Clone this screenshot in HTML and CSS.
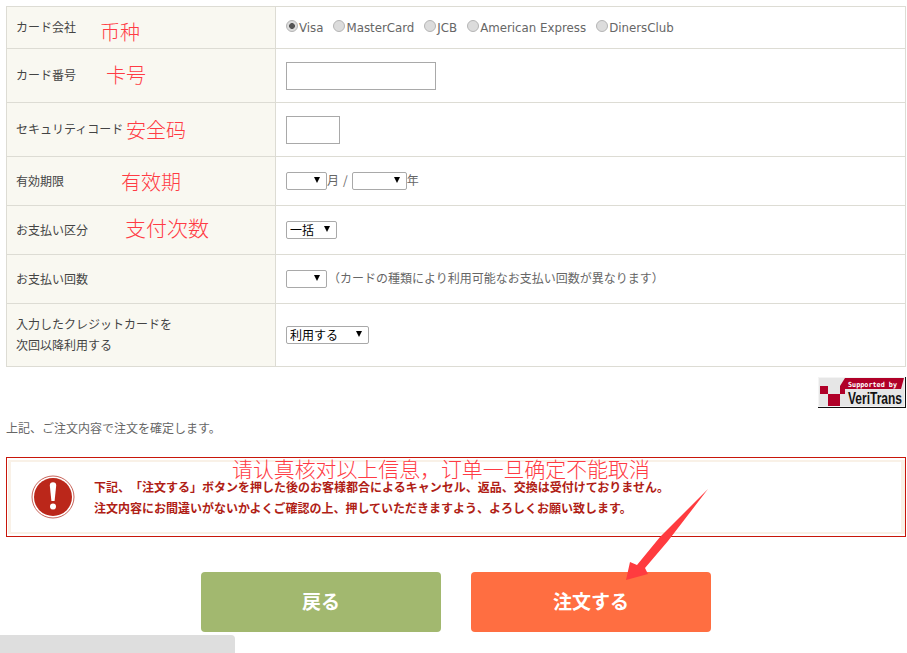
FILE: index.html
```html
<!DOCTYPE html>
<html lang="ja">
<head>
<meta charset="utf-8">
<title>注文</title>
<link rel="stylesheet" href="styles.css">
</head>
<body>
<div class="page">
  <table class="form">
    <tr class="r1"><th>カード会社</th><td>
      <div class="radios">
        <label class="radio"><input type="radio" name="c" checked>Visa</label>
        <label class="radio"><input type="radio" name="c">MasterCard</label>
        <label class="radio"><input type="radio" name="c">JCB</label>
        <label class="radio"><input type="radio" name="c">American Express</label>
        <label class="radio"><input type="radio" name="c">DinersClub</label>
      </div>
    </td></tr>
    <tr class="r2"><th>カード番号</th><td><input class="txt txt-long" type="text"></td></tr>
    <tr class="r2"><th>セキュリティコード</th><td><input class="txt txt-short" type="text"></td></tr>
    <tr class="r3"><th>有効期限</th><td>
      <div class="line"><span class="sel w41"><select></select></span><span class="unit">月</span><span class="slash">/</span><span class="sel w55"><select></select></span><span class="unit">年</span></div>
    </td></tr>
    <tr class="r3"><th>お支払い区分</th><td>
      <div class="line"><span class="sel w51"><select><option>一括</option></select></span></div>
    </td></tr>
    <tr class="r3"><th>お支払い回数</th><td>
      <div class="line"><span class="sel w41"><select></select></span><span class="note">（カードの種類により利用可能なお支払い回数が異なります）</span></div>
    </td></tr>
    <tr class="r4"><th>入力したクレジットカードを<br>次回以降利用する</th><td>
      <div class="line"><span class="sel w83"><select><option>利用する</option></select></span></div>
    </td></tr>
  </table>

  <div class="logo-row">
    <svg class="logo" width="88" height="31" viewBox="0 0 88 31">
      <rect x="0" y="0" width="88" height="31" fill="#111"/>
      <rect x="0" y="0" width="87" height="30" fill="#f4f4f4"/>
      <rect x="1" y="1" width="85" height="28" fill="#e6e6e6"/>
      <path d="M27 1H86L83 12H22V9Z" fill="#b00028"/>
      <rect x="2" y="9" width="8" height="8" fill="#b00028"/>
      <rect x="10" y="17" width="12" height="12" fill="#b00028"/>
      <rect x="22" y="12" width="5" height="5" fill="#b00028"/>
      <text class="logo-top" x="30" y="10" textLength="49" lengthAdjust="spacingAndGlyphs">Supported by</text>
      <text class="logo-main" x="30" y="27" textLength="54" lengthAdjust="spacingAndGlyphs">VeriTrans</text>
    </svg>
  </div>

  <p class="confirm">上記、ご注文内容で注文を確定します。</p>

  <div class="alert">
    <div class="alert-in">
      <svg class="alert-icon" width="44" height="44" viewBox="0 0 44 44">
        <circle cx="22" cy="22" r="21" fill="#fff" stroke="#c9645a" stroke-width="1"/>
        <circle cx="22" cy="22" r="19" fill="#bb271a"/>
        <path d="M18.8 10.5a3.2 3.2 0 0 1 6.4 0L23.6 26h-3.2Z" fill="#fff"/>
        <circle cx="22" cy="31.5" r="3" fill="#fff"/>
      </svg>
      <div class="alert-text">
        <p>下記、「注文する」ボタンを押した後のお客様都合によるキャンセル、返品、交換は受付けておりません。</p>
        <p>注文内容にお間違いがないかよくご確認の上、押していただきますよう、よろしくお願い致します。</p>
      </div>
    </div>
  </div>

  <div class="buttons">
    <a class="btn btn-back">戻る</a>
    <a class="btn btn-order">注文する</a>
  </div>

  <div class="bar"></div>

  <span class="ann a1">币种</span>
  <span class="ann a2">卡号</span>
  <span class="ann a3">安全码</span>
  <span class="ann a4">有效期</span>
  <span class="ann a5">支付次数</span>
  <span class="ann a6">请认真核对以上信息，订单一旦确定不能取消</span>
  <svg class="arrow" width="90" height="100" viewBox="0 0 90 100">
    <path d="M87 0 L39 48 L16 76 L9 73 L5 91 L27 85 L24 79 L47 52Z" fill="#ff3b3f"/>
  </svg>
</div>
</body>
</html>
```
FILE: styles.css
```css
* { box-sizing: border-box; }
html, body { margin: 0; padding: 0; background: #fff; }
body {
  font-family: "DejaVu Sans", "Noto Sans CJK JP", sans-serif;
  font-size: 12px;
  color: #666;
  overflow: hidden;
  text-spacing-trim: space-all;
}
.page { position: relative; width: 907px; height: 653px; padding: 6px 1px 0 6px; overflow: hidden; }
.form { width: 900px; border-collapse: collapse; table-layout: fixed; }
.form th, .form td { border: 1px solid #dddcd4; padding: 0 10px; vertical-align: middle; }
.form th {
  width: 269px;
  background: #f9f8f1;
  font-family: "Noto Sans CJK JP", sans-serif;
  font-weight: 400;
  text-align: left;
  color: #444;
  line-height: 21px;
  padding: 0 0 2px 9px;
}
.r1 { height: 42px; } .r2 { height: 54px; } .r3 { height: 49px; } .r4 { height: 63px; }
.r1 td { vertical-align: top; padding-top: 13px; }
.radios { display: flex; gap: 10px; color: #666; font-size: 11.8px; }
.radio { display: flex; align-items: center; }
.radio input {
  appearance: none; margin: 0 1px 3px 0; width: 12px; height: 12px; border-radius: 50%;
  border: 1px solid #b5b5b5; background: #dcdcdc;
}
.radio input:checked { background: radial-gradient(circle, #555 0 2.6px, #dcdcdc 3.2px); }
.txt { display: block; border: 1px solid #a9a9a9; background: #fff; height: 28px; padding: 0; margin: 0; }
.txt-long { width: 150px; } .txt-short { width: 54px; }
.line { display: flex; align-items: center; font-family: "Noto Sans CJK JP", sans-serif; color: #666; }
.sel { position: relative; display: block; height: 18px; flex: none; }
.sel::after {
  content: ""; position: absolute; right: 7px; top: 5px; width: 0; height: 0;
  border-left: 3px solid transparent; border-right: 3px solid transparent; border-top: 6px solid #000;
}
.sel select {
  appearance: none; display: block; width: 100%; height: 18px; margin: 0; padding: 0 0 0 3px;
  border: 1px solid #a9a9a9; border-radius: 2px; background: #fff; color: #000;
  font-family: "Noto Sans CJK JP", sans-serif; font-size: 12px; line-height: 16px;
}
.w41 { width: 41px; } .w55 { width: 55px; } .w51 { width: 51px; } .w83 { width: 83px; }
.unit { margin-bottom: 3px; }
.slash { margin: 0 4px 3px 4px; }
.note { margin: 0 0 3px 1px; }
.logo-row { display: flex; justify-content: flex-end; margin-top: 10px; height: 31px; }
.logo { display: block; }
.logo-top { font-family: "DejaVu Sans Mono", monospace; font-size: 7px; font-weight: 700; fill: #fff; }
.logo-main { font-family: "Liberation Sans", sans-serif; font-size: 16px; font-weight: 700; fill: #111; }
.confirm { margin: 11px 0 0; font-family: "Noto Sans CJK JP", sans-serif; line-height: 17px; color: #666; }
.alert { margin-top: 21px; height: 80px; border: 1px solid #c8160a; padding: 2px 0 2px 1px; }
.alert-in {
  height: 74px; border-style: solid; border-color: #f9f1e7; border-width: 2px 4px 2px 3px;
  display: flex; align-items: center; padding-left: 20px;
}
.alert-icon { flex: none; display: block; }
.alert-text { margin-left: 19px; font-family: "Noto Sans CJK JP", sans-serif; font-weight: 700; color: #b01e16; font-size: 12px; }
.alert-text p { margin: 0; line-height: 21px; white-space: nowrap; }
.buttons { display: flex; justify-content: center; gap: 30px; margin-top: 35px; }
.btn {
  width: 240px; height: 60px; border-radius: 4px; display: flex; align-items: center; justify-content: center;
  color: #fff; font-family: "Noto Sans CJK JP", sans-serif; font-weight: 700; font-size: 19px; padding-bottom: 3px;
}
.btn-back { background: #a2b86f; }
.btn-order { background: #ff6e41; }
.bar { position: absolute; left: 0; top: 635px; width: 235px; height: 18px; background: #dedede; border-radius: 0 4px 0 0; }
.ann { position: absolute; font-family: "Noto Sans CJK SC", sans-serif; font-weight: 300; color: #ff3b44; font-size: 20px; line-height: 24px; white-space: nowrap; }
.a1 { left: 100px; top: 20px; }
.a2 { left: 106px; top: 63px; }
.a3 { left: 126px; top: 118px; }
.a4 { left: 121px; top: 170px; }
.a5 { left: 125px; top: 215px; font-size: 21px; }
.a6 { left: 232px; top: 456px; font-size: 20.9px; }
.arrow { position: absolute; left: 621px; top: 489px; }
```
